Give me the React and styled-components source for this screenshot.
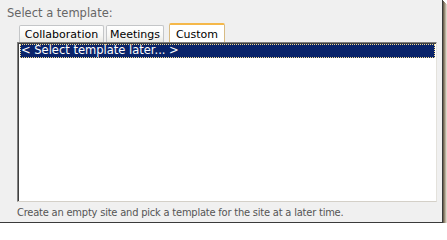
import React from 'react'
import styled, { createGlobalStyle } from 'styled-components'

const GlobalStyle = createGlobalStyle`
  html, body {
    margin: 0;
    padding: 0;
    background: #ffffff;
  }
  body {
    font-family: Verdana, "DejaVu Sans", sans-serif;
    font-size: 11px;
  }
`

const Frame = styled.div`
  box-sizing: border-box;
  width: 443px;
  height: 223px;
  padding-top: 6px;
  display: flex;
  flex-direction: column;
  background: #f0f0f0;
  border-right: 1px solid #3a3a3a;
  border-bottom: 1px solid #3a3a3a;
  box-shadow: 1px 1px 0 #6d6352, 2px 2px 0 #958a76, 3px 3px 0 #bbb19f,
    4px 4px 0 #dcd5c8, 5px 5px 0 #f0ece4;
`

const Label = styled.div`
  margin-left: 7px;
  height: 17px;
  line-height: 14px;
  font-size: 11.5px;
  color: #666666;
`

const Picker = styled.div`
  margin-left: 17px;
  width: 420px;
  display: flex;
  flex-direction: column;
`

const TabStrip = styled.div`
  display: flex;
  align-items: flex-end;
  height: 19px;
  padding-left: 2px;
`

const Tab = styled.div`
  box-sizing: border-box;
  width: ${(p) => p.$w}px;
  height: ${(p) => (p.$active ? 19 : 17)}px;
  margin-right: ${(p) => p.$gap || 0}px;
  display: flex;
  align-items: center;
  justify-content: center;
  padding-top: ${(p) => (p.$active ? 2 : 0)}px;
  color: #000000;
  border: 1px solid ${(p) => (p.$active ? '#d8bb84' : '#c4c6c8')};
  border-bottom: none;
  border-top: ${(p) => (p.$active ? '2px solid #f5b84a' : '1px solid #c4c6c8')};
  border-radius: 2px 2px 0 0;
  background: ${(p) =>
    p.$active ? '#ffffff' : 'linear-gradient(#ffffff, #f7f7f5 60%, #e9e8e3)'};
`

const ListBox = styled.div`
  box-sizing: border-box;
  height: 160px;
  background: #ffffff;
  border-top: 1px solid #808080;
  border-left: 1px solid #808080;
  border-right: 1px solid #e4e2dc;
  border-bottom: 1px solid #d4d0c8;
  box-shadow: inset 1px 1px 0 #404040;
  padding: 1px 1px 0 2px;
`

const Row = styled.div`
  box-sizing: border-box;
  height: 14px;
  line-height: 13px;
  padding-left: 1px;
  font-size: 11.5px;
  color: ${(p) => (p.$selected ? '#ffffff' : '#000000')};
  background: ${(p) => (p.$selected ? '#0a246a' : 'transparent')};
  outline: ${(p) => (p.$selected ? '1px dotted #f5dd8f' : 'none')};
  outline-offset: -1px;
`

const Hint = styled.div`
  margin-top: 4px;
  line-height: 14px;
  font-family: Tahoma, "DejaVu Sans Condensed", sans-serif;
  font-size: 11px;
  letter-spacing: -0.2px;
  color: #555555;
`

const tabs = [
  { name: 'Collaboration', w: 85, gap: 2 },
  { name: 'Meetings', w: 58, gap: 5 },
  { name: 'Custom', w: 56, active: true },
]

export default function App() {
  return (
    <>
      <GlobalStyle />
      <Frame>
        <Label>Select a template:</Label>
        <Picker>
          <TabStrip>
            {tabs.map((t) => (
              <Tab key={t.name} $w={t.w} $gap={t.gap} $active={t.active}>
                {t.name}
              </Tab>
            ))}
          </TabStrip>
          <ListBox>
            <Row $selected>&lt; Select template later... &gt;</Row>
          </ListBox>
          <Hint>
            Create an empty site and pick a template for the site at a later time.
          </Hint>
        </Picker>
      </Frame>
    </>
  )
}
